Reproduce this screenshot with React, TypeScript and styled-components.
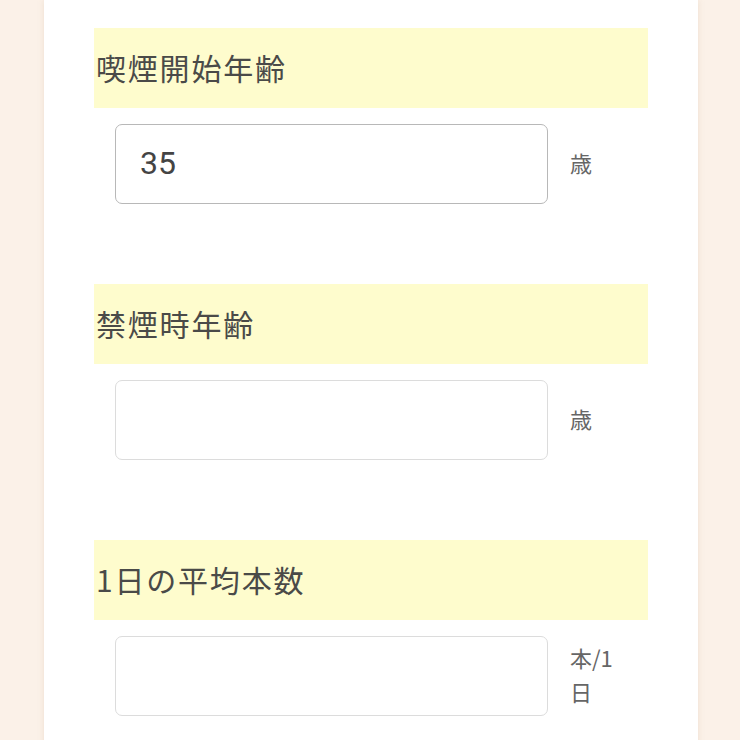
import styled, { createGlobalStyle } from 'styled-components'

const GlobalStyle = createGlobalStyle`
    html, body {
        margin: 0;
        padding: 0;
        background-color: #fbf1e8;
    }
    * {
        box-sizing: border-box;
    }
`

const Card = styled.div`
    margin: 0 42px 0 44px;
    background-color: #ffffff;
    box-shadow: 0 0 6px rgba(200, 170, 140, 0.25);
    padding: 28px 50px 40px 50px;
    min-height: 740px;
    display: flex;
    flex-direction: column;
    gap: 80px;
`

const Section = styled.section`
    display: flex;
    flex-direction: column;
    gap: 16px;
`

const LabelBand = styled.div`
    height: 80px;
    background-color: #fefccd;
    display: flex;
    align-items: center;
    padding: 0 0 2px 2px;
    font-family: 'Noto Sans CJK JP', 'Noto Sans', sans-serif;
    font-size: 30px;
    letter-spacing: 1.8px;
    color: #4a4a48;
`

const FieldRow = styled.div`
    display: flex;
    align-items: center;
    padding-left: 21px;
    gap: 22px;
`

const NumberInput = styled.input<{ $filled?: boolean }>`
    width: 433px;
    height: 80px;
    border: 1.5px solid ${p => (p.$filled ? '#b8b8b8' : '#dcdcdc')};
    border-radius: 7px;
    padding: 0 0 2px 24px;
    font-family: Roboto, 'Liberation Sans', sans-serif;
    font-size: 32px;
    color: #444444;
    background-color: #ffffff;
    outline: none;
`

const Unit = styled.div`
    width: 58px;
    padding-bottom: 4px;
    font-family: 'Noto Sans CJK JP', 'Noto Sans', sans-serif;
    font-size: 22px;
    line-height: 34px;
    color: #666666;
`

const fields = [
    { label: '喫煙開始年齢', value: '35', unit: '歳' },
    { label: '禁煙時年齢', value: '', unit: '歳' },
    { label: '1日の平均本数', value: '', unit: '本/1日' },
]

export default function App() {
    return (
        <>
            <GlobalStyle />
            <Card>
                {fields.map(f => (
                    <Section key={f.label}>
                        <LabelBand>{f.label}</LabelBand>
                        <FieldRow>
                            <NumberInput
                                type="text"
                                inputMode="numeric"
                                defaultValue={f.value}
                                $filled={f.value !== ''}
                            />
                            <Unit>{f.unit}</Unit>
                        </FieldRow>
                    </Section>
                ))}
            </Card>
        </>
    )
}
